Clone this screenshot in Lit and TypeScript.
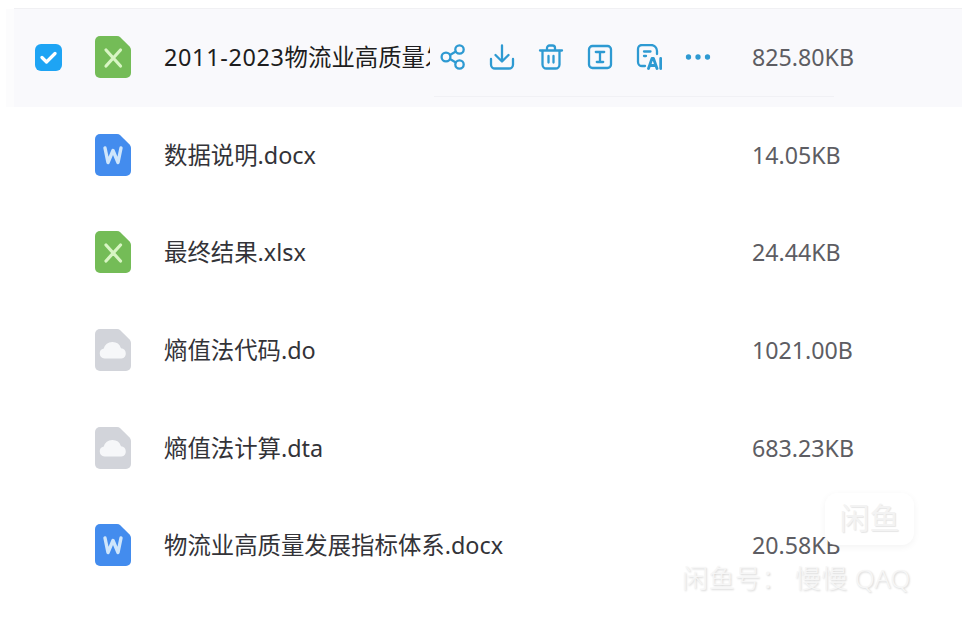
import { LitElement, html, css, svg } from 'lit'
import { customElement } from 'lit/decorators.js'

type Kind = 'xls' | 'doc' | 'other'

interface FileRow {
  lead?: string
  name: string
  size: string
  kind: Kind
}

const FILES: FileRow[] = [
  { lead: '2011-2023', name: '物流业高质量发展指标数据.xlsx', size: '825.80KB', kind: 'xls' },
  { name: '数据说明.docx', size: '14.05KB', kind: 'doc' },
  { name: '最终结果.xlsx', size: '24.44KB', kind: 'xls' },
  { name: '熵值法代码.do', size: '1021.00B', kind: 'other' },
  { name: '熵值法计算.dta', size: '683.23KB', kind: 'other' },
  { name: '物流业高质量发展指标体系.docx', size: '20.58KB', kind: 'doc' },
]

const SHEET = 'M5 0H22Q24 0 25.5 1.4L34.6 10.4Q36 12 36 14V37A5 5 0 0 1 31 42H5A5 5 0 0 1 0 37V5A5 5 0 0 1 5 0Z'

function fileIcon(kind: Kind) {
  const fill = kind === 'xls' ? '#74bc57' : kind === 'doc' ? '#438cee' : '#d2d4da'
  let mark = svg``
  if (kind === 'xls') {
    mark = svg`<path d="M11 14L25.5 30M25.5 14L11 30" stroke="#d8f5c4" stroke-width="3.2" stroke-linecap="round" fill="none"/>`
  } else if (kind === 'doc') {
    mark = svg`<path d="M10 14L13 28.5L18 16.5L23 28.5L26 14" stroke="#cfe6fb" stroke-width="3.4" stroke-linejoin="round" stroke-linecap="round" fill="none"/>`
  } else {
    mark = svg`<path d="M9.5 29.5A5 5 0 0 1 8.8 19.6A9 9 0 0 1 26 19.2A5.2 5.2 0 0 1 26.5 29.5Z" fill="#f6f7f9"/>`
  }
  return html`<svg class="file-icon" viewBox="0 0 36 42">
    <path d=${SHEET} fill=${fill}></path>
    ${mark}
  </svg>`
}

@customElement('app-root')
export class AppRoot extends LitElement {
  static styles = css`
    :host {
      display: block;
      width: 962px;
      height: 632px;
      position: relative;
      overflow: hidden;
      background: #fff;
      font-family: "Noto Sans", "Noto Sans CJK SC", sans-serif;
      color: #333338;
    }

    .list {
      padding: 8px 0 0 14px;
    }

    .list-top {
      height: 1px;
      background: #f0f0f3;
    }

    .row {
      height: 97.6px;
      display: grid;
      grid-template-columns: 21px 27px 33px 36px 33px 266px 322px auto;
      grid-template-areas: ". check . icon . name actions size";
      align-items: center;
      box-sizing: border-box;
      position: relative;
    }

    .row.active {
      background: #f9f9fc;
      box-shadow: -8px 0 0 #fcfcfd;
      color: #1d1d20;
    }

    .row.active::after {
      content: "";
      position: absolute;
      left: 420px;
      width: 400px;
      top: 87px;
      height: 1px;
      background: #f1f1f5;
    }

    .check {
      grid-area: check;
      width: 27px;
      height: 27px;
      border-radius: 6px;
      background: #1ea4f4;
      display: flex;
      align-items: center;
      justify-content: center;
    }

    .check svg {
      width: 17px;
      height: 13px;
    }

    .file-icon {
      grid-area: icon;
      width: 36px;
      height: 42px;
      display: block;
      margin-top: -1px;
    }

    .name {
      grid-area: name;
      font-size: 23.4px;
      line-height: 32px;
      padding-bottom: 1px;
      white-space: nowrap;
    }

    .row.active .name {
      overflow: hidden;
    }

    .lead {
      letter-spacing: 0.67px;
    }

    .actions {
      grid-area: actions;
      display: flex;
      gap: 23px;
      padding-left: 10px;
      align-items: center;
      margin-top: -1px;
    }

    .actions svg {
      width: 26px;
      height: 26px;
      fill: none;
      stroke: #2e9ad2;
      stroke-width: 2.3;
      stroke-linecap: round;
      stroke-linejoin: round;
      display: block;
    }

    .size {
      grid-area: size;
      font-size: 23.2px;
      line-height: 32px;
      padding-bottom: 1px;
      color: #5d5d63;
      white-space: nowrap;
    }

    .mark {
      position: absolute;
      left: 825px;
      top: 493px;
      width: 89px;
      height: 52px;
      box-sizing: border-box;
      border-radius: 12px;
      background: #fff;
      box-shadow: 0 2px 7px rgba(0, 0, 0, 0.05);
      color: #f3f3f3;
      text-shadow: 1px 1px 1px rgba(0, 0, 0, 0.1);
      font-size: 30px;
      line-height: 50px;
      text-align: center;
      white-space: nowrap;
      font-weight: 400;
    }

    .mark-line {
      position: absolute;
      left: 682px;
      top: 560px;
      font-size: 26px;
      font-weight: 300;
      letter-spacing: 0.4px;
      line-height: 36px;
      color: #f6f6f6;
      text-shadow: 1px 1px 2px rgba(0, 0, 0, 0.18);
      white-space: nowrap;
    }
  `

  private renderActions() {
    return html`<div class="actions">
      <svg viewBox="0 0 26 26">
        <circle cx="6" cy="13" r="4.4"></circle>
        <circle cx="19.5" cy="5.5" r="4.2"></circle>
        <circle cx="19.5" cy="20.5" r="4.2"></circle>
        <path d="M10 11L15.8 7.6M10 15L15.8 18.4"></path>
      </svg>
      <svg viewBox="0 0 26 26">
        <path d="M13 1.5V17M6.5 11L13 17.5L19.5 11"></path>
        <path d="M2 15V20.5A4 4 0 0 0 6 24.5H20A4 4 0 0 0 24 20.5V15"></path>
      </svg>
      <svg viewBox="0 0 26 26">
        <path d="M2 6.5H24M9 6V4A2.5 2.5 0 0 1 11.5 1.5H14.5A2.5 2.5 0 0 1 17 4V6"></path>
        <path d="M4.5 7V20.5A4 4 0 0 0 8.5 24.5H17.5A4 4 0 0 0 21.5 20.5V7"></path>
        <path d="M10.5 12V18.5M15.5 12V18.5"></path>
      </svg>
      <svg viewBox="0 0 26 26">
        <rect x="2" y="2" width="22" height="22" rx="3.5"></rect>
        <path d="M8.8 8H17.2M13 8V18M9.8 18H16.2"></path>
      </svg>
      <svg viewBox="0 0 26 26">
        <path d="M9 22H6A4 4 0 0 1 2 18V5A4 4 0 0 1 6 1H15A6 6 0 0 1 21 7V10"></path>
        <path d="M8 7.5H14.5M8 12H10"></path>
        <path d="M12.5 24.5L16 14.5H17.5L21 24.5M14 21.5H19.5M24.7 14.5V24.5" stroke-width="2.8"></path>
      </svg>
      <svg viewBox="0 0 26 26">
        <circle cx="3.5" cy="13" r="1.5" fill="#2e9ad2"></circle>
        <circle cx="13" cy="13" r="1.5" fill="#2e9ad2"></circle>
        <circle cx="22.5" cy="13" r="1.5" fill="#2e9ad2"></circle>
      </svg>
    </div>`
  }

  render() {
    return html`
      <div class="list">
        <div class="list-top"></div>
        ${FILES.map(
          (f, i) => html`<div class="row ${i === 0 ? 'active' : ''}">
            ${i === 0
              ? html`<div class="check">
                  <svg viewBox="0 0 17 13">
                    <path d="M2 6.5L6.5 11L15 2.5" fill="none" stroke="#fff" stroke-width="3.2" stroke-linecap="round" stroke-linejoin="round"></path>
                  </svg>
                </div>`
              : ''}
            ${fileIcon(f.kind)}
            <div class="name">${f.lead ? html`<span class="lead">${f.lead}</span>` : ''}${f.name}</div>
            ${i === 0 ? this.renderActions() : ''}
            <div class="size">${f.size}</div>
          </div>`
        )}
      </div>
      <div class="mark">闲鱼</div>
      <div class="mark-line">闲鱼号： 慢慢 QAQ</div>
    `
  }
}

declare global {
  interface HTMLElementTagNameMap {
    'app-root': AppRoot
  }
}
